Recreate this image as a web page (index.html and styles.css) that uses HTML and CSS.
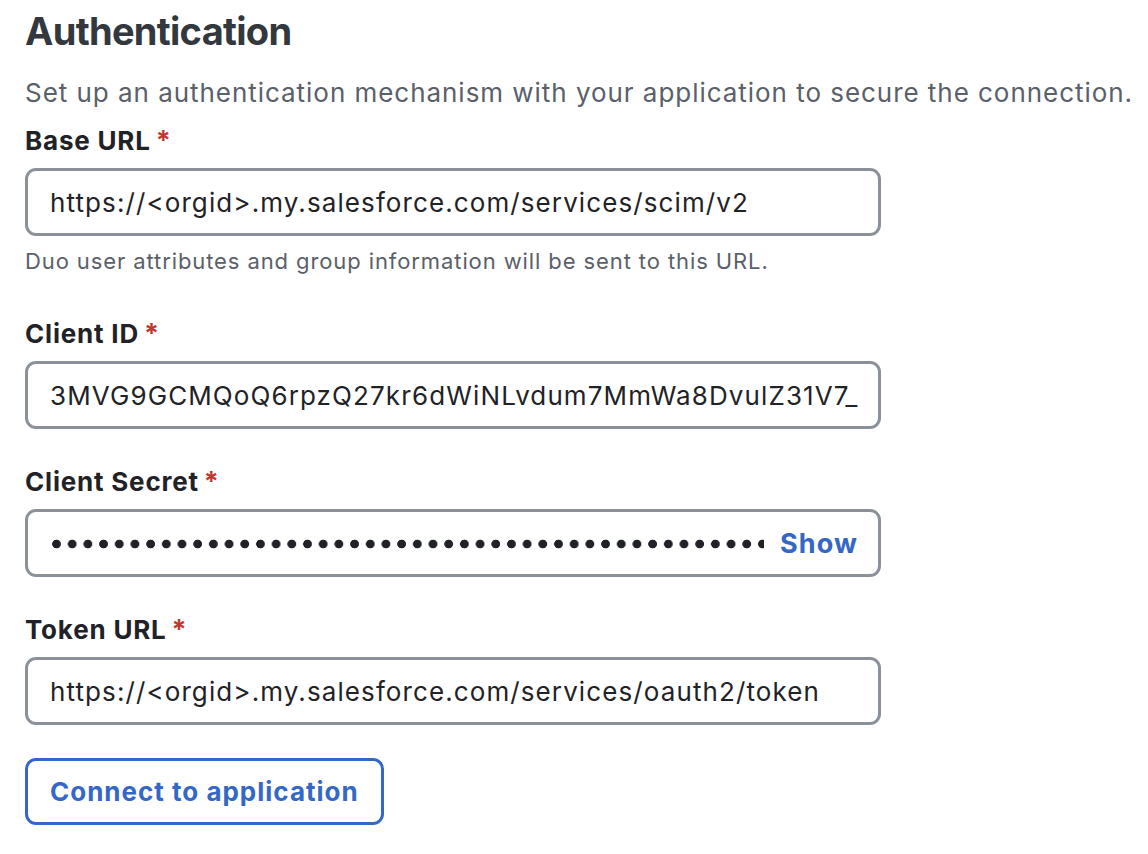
FILE: index.html
```html
<!DOCTYPE html>
<html lang="en">
<head>
<meta charset="utf-8">
<title>Authentication</title>
<link rel="stylesheet" href="styles.css">
</head>
<body>
<main class="page">
  <h1 class="title">Authentication</h1>
  <p class="intro">Set up an authentication mechanism with your application to secure the connection.</p>

  <div class="field">
    <label class="label" for="base-url">Base URL<span class="req">*</span></label>
    <div class="control"><input class="input" id="base-url" type="text" value="https://&lt;orgid&gt;.my.salesforce.com/services/scim/v2"></div>
    <p class="help">Duo user attributes and group information will be sent to this URL.</p>
  </div>

  <div class="field">
    <label class="label" for="client-id">Client ID<span class="req">*</span></label>
    <div class="control"><input class="input" id="client-id" type="text" value="3MVG9GCMQoQ6rpzQ27kr6dWiNLvdum7MmWa8DvulZ31V7_xk2Qp9LmnR"></div>
  </div>

  <div class="field">
    <label class="label" for="client-secret">Client Secret<span class="req">*</span></label>
    <div class="control secret">
      <input class="input input-secret" id="client-secret" type="password" value="abcdefghijklmnopqrstuvwxyzabcdefghijklmnopqrstuvwxyzabcdefghij">
      <button class="show" type="button">Show</button>
    </div>
  </div>

  <div class="field">
    <label class="label" for="token-url">Token URL<span class="req">*</span></label>
    <div class="control"><input class="input" id="token-url" type="text" value="https://&lt;orgid&gt;.my.salesforce.com/services/oauth2/token"></div>
  </div>

  <button class="connect" type="button">Connect to application</button>
</main>
</body>
</html>
```

FILE: styles.css
```css
html, body {
  margin: 0;
  padding: 0;
  background: #ffffff;
}

body {
  font-family: Inter, "Noto Sans", "Liberation Sans", sans-serif;
  color: #1f2328;
}

.page {
  padding: 8px 0 0 25px;
  width: 1123px;
}

.title {
  margin: 0;
  font-size: 38px;
  line-height: 46px;
  font-weight: 700;
  color: #33373e;
  letter-spacing: -0.7px;
}

.intro {
  margin: 21px 0 0;
  font-size: 26px;
  line-height: 36px;
  color: #5a606a;
  letter-spacing: 0.96px;
  white-space: nowrap;
}

.field {
  margin-top: 14px;
  display: flex;
  flex-direction: column;
}

.field + .field {
  margin-top: 37px;
}

.label {
  font-size: 26px;
  line-height: 32px;
  font-weight: 700;
  color: #1f2328;
  letter-spacing: 0.8px;
}

.req {
  color: #c0392e;
  margin-left: 5px;
  font-size: 27px;
}

.control {
  margin-top: 11px;
  width: 856px;
  height: 68px;
  box-sizing: border-box;
  border: 3px solid #8b9199;
  border-radius: 11px;
  display: flex;
  align-items: center;
  background: #fff;
}

.input {
  flex: 1;
  min-width: 0;
  height: 100%;
  box-sizing: border-box;
  border: 0;
  outline: none;
  background: transparent;
  padding: 0 20px 0 22px;
  font-family: Inter, "Noto Sans", "Liberation Sans", sans-serif;
  font-size: 26px;
  letter-spacing: 1.1px;
  color: #1f2328;
}

.input-secret {
  padding: 0 12px 0 24px;
  color: transparent;
  caret-color: #1f2328;
  background-image: radial-gradient(circle at 4.5px calc(50% + 1px), #1f2328 0, #1f2328 4px, rgba(31, 35, 40, 0) 4.7px);
  background-size: 15.7px 100%;
  background-repeat: repeat-x;
  background-origin: content-box;
  background-clip: content-box;
}

.show {
  border: 0;
  background: transparent;
  padding: 0 20px 0 4px;
  font-family: Inter, "Noto Sans", "Liberation Sans", sans-serif;
  font-size: 27px;
  font-weight: 700;
  letter-spacing: 1.1px;
  color: #3467c8;
  cursor: pointer;
}

.help {
  margin: 10px 0 5px;
  font-size: 22px;
  line-height: 30px;
  color: #5a606a;
  letter-spacing: 0.9px;
}

.connect {
  margin-top: 33px;
  height: 67px;
  box-sizing: border-box;
  padding: 0 22px;
  border: 3px solid #3467c8;
  border-radius: 11px;
  background: #fff;
  font-family: Inter, "Noto Sans", "Liberation Sans", sans-serif;
  font-size: 26px;
  font-weight: 700;
  letter-spacing: 1px;
  color: #3467c8;
  cursor: pointer;
}
```
